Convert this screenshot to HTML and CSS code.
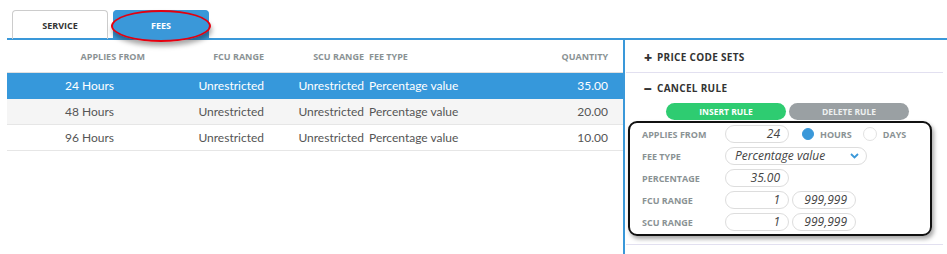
FILE: index.html
```html
<!DOCTYPE HTML>
<html lang="en">
<head>
<meta charset="UTF-8">
<title>Fees</title>
<link rel="stylesheet" href="styles.css">
</head>
<body>
  <div class="tabBar">
    <div class="tab">SERVICE</div>
    <div class="tab on">FEES<span class="mark"></span></div>
  </div>
  <div class="main">
    <div class="grid">
      <div class="row head">
        <div class="c1">APPLIES FROM</div>
        <div class="c2">FCU RANGE</div>
        <div class="c3">SCU RANGE</div>
        <div class="c4">FEE TYPE</div>
        <div class="c5">QUANTITY</div>
      </div>
      <div class="row sel">
        <div class="c1">24 Hours</div>
        <div class="c2">Unrestricted</div>
        <div class="c3">Unrestricted</div>
        <div class="c4">Percentage value</div>
        <div class="c5">35.00</div>
      </div>
      <div class="row alt">
        <div class="c1">48 Hours</div>
        <div class="c2">Unrestricted</div>
        <div class="c3">Unrestricted</div>
        <div class="c4">Percentage value</div>
        <div class="c5">20.00</div>
      </div>
      <div class="row">
        <div class="c1">96 Hours</div>
        <div class="c2">Unrestricted</div>
        <div class="c3">Unrestricted</div>
        <div class="c4">Percentage value</div>
        <div class="c5">10.00</div>
      </div>
    </div>
    <div class="side">
      <div class="secHead"><span class="sign">+</span>PRICE CODE SETS</div>
      <div class="secHead open"><span class="sign">&minus;</span>CANCEL RULE</div>
      <div class="btns">
        <div class="btn insert">INSERT RULE</div>
        <div class="btn delete">DELETE RULE</div>
      </div>
      <div class="ruleBox">
        <div class="fRow">
          <div class="lbl">APPLIES FROM</div>
          <div class="inp">24</div>
          <span class="radio checked"></span><span class="rLbl">HOURS</span>
          <span class="radio"></span><span class="rLbl">DAYS</span>
        </div>
        <div class="fRow">
          <div class="lbl">FEE TYPE</div>
          <div class="inp select">Percentage value
            <svg width="9" height="6" viewBox="0 0 9 6"><path d="M1 1 L4.5 4.5 L8 1" fill="none" stroke="#3a98d9" stroke-width="1.8"/></svg>
          </div>
        </div>
        <div class="fRow">
          <div class="lbl">PERCENTAGE</div>
          <div class="inp">35.00</div>
        </div>
        <div class="fRow">
          <div class="lbl">FCU RANGE</div>
          <div class="inp">1</div>
          <div class="inp">999,999</div>
        </div>
        <div class="fRow">
          <div class="lbl">SCU RANGE</div>
          <div class="inp">1</div>
          <div class="inp">999,999</div>
        </div>
      </div>
    </div>
  </div>
</body>
</html>
```

FILE: styles.css
```css
* { margin: 0; padding: 0; box-sizing: border-box; }
body {
  width: 947px;
  height: 254px;
  background: #fff;
  font-family: "Open Sans", "Noto Sans", sans-serif;
  color: #555;
  overflow: hidden;
}

.tabBar {
  display: flex;
  gap: 5px;
  margin: 10px 0 0 7px;
  padding-left: 5px;
  height: 30px;
  border-bottom: 2px solid #3a98d9;
}
.tab {
  position: relative;
  width: 96px;
  height: 29px;
  border: 1px solid #ccc;
  border-bottom: none;
  border-radius: 4px 4px 0 0;
  font-size: 9px;
  font-weight: 700;
  color: #333;
  display: flex;
  align-items: center;
  justify-content: center;
}
.tab.on {
  background: #3a98d9;
  border-color: #3a98d9;
  color: #fff;
}
.tab .mark {
  position: absolute;
  left: -3px;
  top: -1px;
  width: 100px;
  height: 32px;
  border: 2px solid #e3000f;
  border-radius: 50%;
  box-shadow: 1px 4px 5px rgba(0,0,0,0.35);
}

.main {
  display: flex;
  height: 214px;
}
.grid {
  width: 616px;
  margin-left: 7px;
}
.row {
  display: grid;
  grid-template-columns: 138px 119px 100px 1fr 60px;
  padding-right: 15px;
  height: 26px;
  align-items: center;
  font-family: "Lato", sans-serif;
  font-size: 12px;
  border-bottom: 1px solid #e6e6e6;
}
.row .c1 { text-align: right; padding-right: 31px; }
.row .c2, .row .c3, .row .c5 { text-align: right; }
.row .c4 { padding-left: 5px; }
.row.head {
  height: 33px;
  font-family: "Open Sans", sans-serif;
  font-size: 9px;
  font-weight: 700;
  color: #8a9294;
  border-bottom: 1px solid #e0e0e0;
}
.row.head .c1 { padding-right: 0; }
.row.sel { background: #3698db; color: #fff; border-bottom-color: #3698db; }
.row.alt { background: #f5f5f5; }

.side {
  width: 322px;
  border-left: 2px solid #3a98d9;
  padding: 2px 0 0 1px;
}
.secHead {
  height: 31px;
  display: flex;
  align-items: center;
  padding-left: 18px;
  font-size: 10px;
  font-weight: 700;
  color: #333;
  letter-spacing: 0.3px;
  border-bottom: 1px solid #e2e0f0;
  margin-right: 2px;
}
.secHead .sign {
  width: 13px;
  font-size: 14px;
  font-weight: 800;
}
.secHead.open { border-bottom: none; height: 30px; }
.btns {
  display: flex;
  gap: 3px;
  padding-left: 40px;
}
.btn {
  width: 120px;
  height: 17px;
  border-radius: 9px;
  font-size: 8.5px;
  font-weight: 700;
  color: #fff;
  display: flex;
  align-items: center;
  justify-content: center;
}
.btn.insert { background: #2ecc71; }
.btn.delete { background: #9aa0a3; color: #eef0f0; }

.ruleBox {
  width: 304px;
  margin: 1px 0 0 2px;
  border: 2px solid #111;
  border-radius: 9px;
  box-shadow: 2px 3px 4px rgba(0,0,0,0.35);
  padding: 2px 0 3px 12px;
  display: flex;
  flex-direction: column;
  gap: 4px;
}
.fRow {
  display: flex;
  align-items: center;
  height: 18px;
}
.lbl {
  width: 83px;
  font-size: 9px;
  font-weight: 700;
  color: #8a9294;
}
.inp {
  width: 64px;
  height: 18px;
  margin-right: 3px;
  border: 1px solid #ddd;
  border-radius: 9px;
  font-size: 12px;
  font-style: italic;
  color: #444;
  text-align: right;
  padding-right: 8px;
  line-height: 16px;
}
.inp.select {
  width: 142px;
  text-align: left;
  padding: 0 7px 0 9px;
  display: flex;
  align-items: center;
  justify-content: space-between;
}
.radio {
  width: 14px;
  height: 14px;
  border-radius: 50%;
  border: 1px solid #e2e2e2;
  margin-left: 11px;
}
.radio.checked {
  background: #3a98d9;
  border-color: #3a98d9;
  width: 12px;
  height: 12px;
  margin-left: 10px;
}
.rLbl {
  font-size: 9px;
  font-weight: 700;
  color: #8a9294;
  margin-left: 6px;
}
.side::after {
  content: "";
  display: block;
  margin-top: 8px;
  border-bottom: 1px solid #e2e0f0;
  margin-right: 2px;
}
```
